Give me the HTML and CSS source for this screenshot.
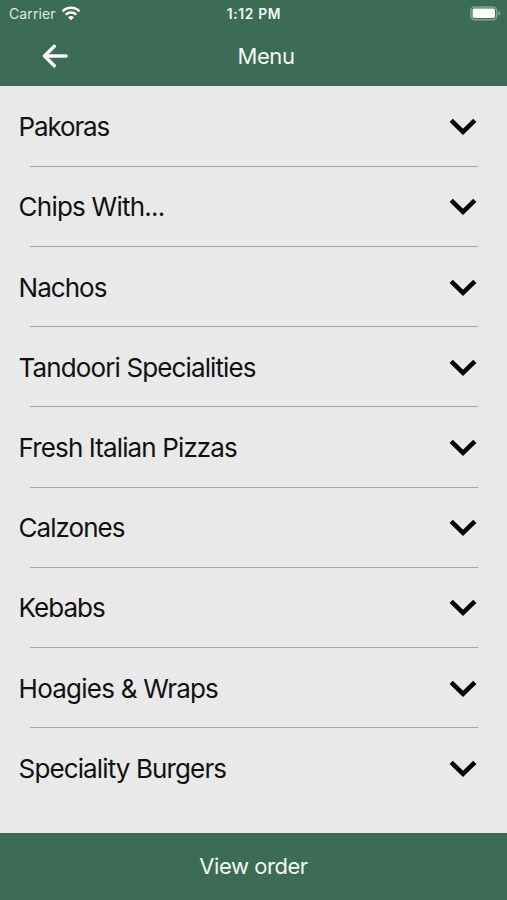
FILE: index.html
```html
<!DOCTYPE html>
<html lang="en">
<head>
<meta charset="utf-8">
<title>Menu</title>
<link rel="stylesheet" href="styles.css">
</head>
<body>
<svg width="0" height="0" class="symbols" aria-hidden="true">
  <symbol id="chevron" viewBox="0 0 28 18"><path d="M2.2 2.4 14 13.8 25.8 2.4" fill="none" stroke="#000" stroke-width="4.6"/></symbol>
</svg>
<div class="app">
  <header class="header">
    <div class="status">
      <div class="carrier"><span class="carrier-name">Carrier</span>
        <svg class="wifi" width="20" height="15" viewBox="0 0 20 15" fill="none" stroke="#fff" stroke-width="2.5"><path d="M1.5 5.3C6.2.6 13.8.6 18.5 5.3M4.7 8.7C7.6 5.9 12.4 5.9 15.3 8.7"/><path d="M7 11.3Q10 8.7 13 11.3L10 14.2Z" fill="#fff" stroke="none"/></svg>
      </div>
      <div class="time">1:12 PM</div>
      <svg class="battery" width="31" height="15" viewBox="0 0 31 15"><rect x=".9" y=".9" width="25.8" height="12.8" rx="3.6" fill="none" stroke="#83a492" stroke-width="1.5"/><rect x="2.6" y="2.6" width="22.4" height="9.400" rx="1.6" fill="#fff"/><path d="M28.300 5.200Q30.300 5.800 30.300 7.400T28.300 9.600Z" fill="#83a492"/></svg>
    </div>
    <div class="nav">
      <svg class="back" width="27" height="24" viewBox="0 0 27 24" fill="none" stroke="#fff" stroke-width="3.4" stroke-linecap="round" stroke-linejoin="round"><path d="M12.3 2.2 2.5 12l9.8 9.7"/><path d="M3 12h22.500" stroke-linecap="butt"/></svg>
      <h1 class="title">Menu</h1>
    </div>
  </header>
  <main class="list">
    <div class="row tightest"><span>Pakoras</span><svg class="chevron"><use href="#chevron"/></svg></div>
    <div class="row loose"><span>Chips With...</span><svg class="chevron"><use href="#chevron"/></svg></div>
    <div class="row tight"><span>Nachos</span><svg class="chevron"><use href="#chevron"/></svg></div>
    <div class="row"><span>Tandoori Specialities</span><svg class="chevron"><use href="#chevron"/></svg></div>
    <div class="row"><span>Fresh Italian Pizzas</span><svg class="chevron"><use href="#chevron"/></svg></div>
    <div class="row tight"><span>Calzones</span><svg class="chevron"><use href="#chevron"/></svg></div>
    <div class="row tight"><span>Kebabs</span><svg class="chevron"><use href="#chevron"/></svg></div>
    <div class="row loose"><span>Hoagies &amp; Wraps</span><svg class="chevron"><use href="#chevron"/></svg></div>
    <div class="row"><span>Speciality Burgers</span><svg class="chevron"><use href="#chevron"/></svg></div>
  </main>
  <footer class="footer">View order</footer>
</div>
</body>
</html>
```
FILE: styles.css
```css
body { margin: 0; font-family: Inter, "Liberation Sans", sans-serif; color: #111; }
.symbols { display: block; }
.app { display: flex; flex-direction: column; width: 507px; height: 900px; overflow: hidden; background: #e9e9e9; }
.header { box-sizing: border-box; height: 86px; flex: none; background: #3c6c55; color: #f3f8f5; }
.status { display: grid; grid-template-columns: 1fr auto 1fr; align-items: center; height: 27px; padding: 0 6px 0 9px; }
.carrier { display: flex; align-items: center; gap: 5px; font-size: 14px; color: #dfe9e3; }
.carrier-name { letter-spacing: 0.1px; }
.time { margin-right: 2px; font-size: 13.8px; font-weight: 600; letter-spacing: 0.65px; }
.battery { justify-self: end; }
.nav { display: grid; grid-template-columns: 1fr auto 1fr; align-items: center; height: 58px; }
.back { margin-left: 42px; }
.title { grid-column: 2; margin: 0 -25px 0 0; font-size: 22px; line-height: 28px; font-weight: 400; letter-spacing: -0.45px; }
.list { flex: 1; padding-top: 0.6px; }
.row { display: flex; align-items: center; justify-content: space-between; box-sizing: border-box; height: 80.2px; padding: 0 30px 0 18.6px; font-size: 26px; letter-spacing: -0.88px; background: linear-gradient(#a3a3a3, #a3a3a3) 30px 100% / 448px 1px no-repeat; }
.row.loose { letter-spacing: -0.77px; }
.row.tight { letter-spacing: -0.98px; }
.row.tightest { letter-spacing: -1.15px; }
.row:last-child { background: none; }
.chevron { width: 28px; height: 18px; margin-top: 1px; }
.footer { box-sizing: border-box; flex: none; height: 67px; line-height: 67px; text-align: center; background: #3c6c55; color: #f3f8f5; font-size: 22px; letter-spacing: -0.45px; }
```
